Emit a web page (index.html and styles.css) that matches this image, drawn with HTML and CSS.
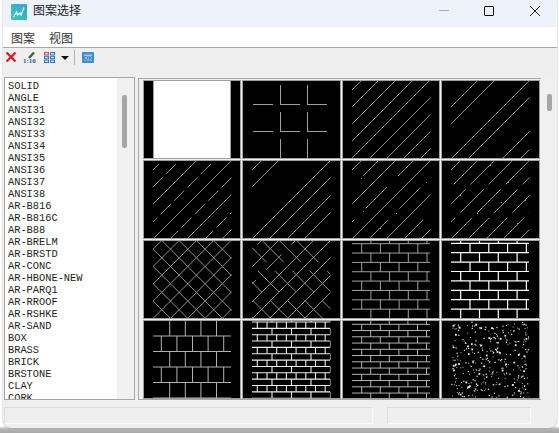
FILE: index.html
```html
<!DOCTYPE html>
<html lang="zh">
<head>
    <meta charset="UTF-8">
    <meta name="viewport" content="width=device-width, initial-scale=1.0">
    <title>图案选择</title>
    <link rel="stylesheet" href="styles.css">
</head>
<body>
    <div class="window">
        <div class="titlebar">
            <svg class="app-icon" width="16" height="16" viewBox="0 0 16 16">
                <defs>
                    <linearGradient id="app-bg" x1="0" y1="1" x2="1" y2="0">
                        <stop offset="0" stop-color="#2fd0b8"/>
                        <stop offset="1" stop-color="#3f9fd8"/>
                    </linearGradient>
                </defs>
                <rect width="16" height="16" rx="1" fill="url(#app-bg)"/>
                <path d="M2.5 13 L5.5 8 L6.5 11 L9 9 L10 11 L13 3.5" fill="none" stroke="#fff" stroke-width="1.2"/>
            </svg>
            <span class="title">图案选择</span>
            <div class="controls">
                <span class="btn-min"></span>
                <span class="btn-max"></span>
                <svg class="btn-close" width="10" height="10" viewBox="0 0 10 10">
                    <path d="M0 0 L10 10 M10 0 L0 10" stroke="#222" stroke-width="1"/>
                </svg>
            </div>
        </div>

        <div class="menubar">
            <span>图案</span>
            <span>视图</span>
        </div>

        <div class="toolbar">
            <svg class="tool tool-del" width="10" height="10" viewBox="0 0 10 10">
                <path d="M0.5 0.5 L9.5 9.5 M9.5 0.5 L0.5 9.5" stroke="#e8141c" stroke-width="2.2"/>
            </svg>
            <svg class="tool tool-scale" width="13" height="14" viewBox="0 0 13 14">
                <path d="M6 7 L11 1.5" stroke="#5a5a4a" stroke-width="2.6"/>
                <text x="0" y="12" class="scale-text">1:10</text>
            </svg>
            <svg class="tool tool-grid" width="11" height="11" viewBox="0 0 11 11">
                <g fill="#cfe0f5" stroke="#2f78c8" stroke-width="1">
                    <rect x="0.5" y="0.5" width="4" height="2.4" stroke="#d0503c"/>
                    <rect x="6.5" y="0.5" width="4" height="2.4"/>
                    <rect x="0.5" y="4.3" width="4" height="2.4"/>
                    <rect x="6.5" y="4.3" width="4" height="2.4"/>
                    <rect x="0.5" y="8.1" width="4" height="2.4"/>
                    <rect x="6.5" y="8.1" width="4" height="2.4"/>
                </g>
            </svg>
            <span class="tool-arrow"></span>
            <span class="tool-sep"></span>
            <svg class="tool tool-ok" width="12" height="11" viewBox="0 0 12 11">
                <rect width="12" height="11" rx="1" fill="#3d8fd0"/>
                <rect x="2" y="2.5" width="8" height="6" fill="#9cc9ec"/>
                <text x="6" y="8" text-anchor="middle" class="ok-text">OK</text>
            </svg>
        </div>

        <div class="main">
            <div class="list-box">
                <ul class="names">
                    <li>SOLID</li>
                    <li>ANGLE</li>
                    <li>ANSI31</li>
                    <li>ANSI32</li>
                    <li>ANSI33</li>
                    <li>ANSI34</li>
                    <li>ANSI35</li>
                    <li>ANSI36</li>
                    <li>ANSI37</li>
                    <li>ANSI38</li>
                    <li>AR-B816</li>
                    <li>AR-B816C</li>
                    <li>AR-B88</li>
                    <li>AR-BRELM</li>
                    <li>AR-BRSTD</li>
                    <li>AR-CONC</li>
                    <li>AR-HBONE-NEW</li>
                    <li>AR-PARQ1</li>
                    <li>AR-RROOF</li>
                    <li>AR-RSHKE</li>
                    <li>AR-SAND</li>
                    <li>BOX</li>
                    <li>BRASS</li>
                    <li>BRICK</li>
                    <li>BRSTONE</li>
                    <li>CLAY</li>
                    <li>CORK</li>
                </ul>
                <div class="scroll scroll-list"><span class="thumb"></span></div>
            </div>
            <div class="preview-box">
                <div class="preview-grid" id="preview-grid"></div>
            </div>
            <div class="scroll scroll-preview"><span class="thumb"></span></div>
        </div>

        <div class="statusbar">
            <div class="pane pane-wide"></div>
            <div class="pane pane-small"></div>
        </div>
    </div>

    <script src="app.js"></script>
</body>
</html>
```

FILE: styles.css
```css
html, body {
    margin: 0;
    height: 100%;
    overflow: hidden;
}
body {
    background: linear-gradient(to bottom, #fff 426px, #b4b4b4 429px, #a8a8a8 433px);
    font-family: "Noto Sans CJK SC", "Liberation Sans", sans-serif;
    color: #222;
    padding: 0 2px 5px 3px;
    box-sizing: border-box;
}
.window {
    height: 428px;
    background-color: #efefef;
    border-radius: 0 0 8px 8px;
    box-shadow: 0 0 2px rgba(0, 0, 0, 0.35);
    display: flex;
    flex-direction: column;
    overflow: hidden;
}

/* title bar */
.titlebar {
    height: 27px;
    background-color: #eef2fb;
    display: flex;
    align-items: center;
    padding: 0 17px 4px 8px;
    box-sizing: border-box;
}
.app-icon {
    margin-right: 6px;
}
.title {
    font-size: 12px;
    line-height: 16px;
    margin-bottom: 3px;
}
.controls {
    margin-left: auto;
    display: flex;
    align-items: center;
    margin-bottom: 2px;
}
.btn-min {
    width: 10px;
    height: 1px;
    background-color: #aaa;
    margin-right: 35px;
}
.btn-max {
    width: 8px;
    height: 8px;
    border: 1px solid #111;
    border-radius: 1px;
    margin-right: 36px;
}

/* menu */
.menubar {
    height: 20px;
    background-color: #fff;
    border-bottom: 1px solid #a8a8a8;
    display: flex;
    gap: 14px;
    padding-left: 8px;
    font-size: 12px;
    line-height: 21px;
    color: #333;
}

/* toolbar */
.toolbar {
    height: 27px;
    display: flex;
    align-items: flex-start;
    padding: 4px 0 0 3px;
    box-sizing: border-box;
}
.tool-scale {
    margin: -1px 0 0 7px;
}
.tool-grid {
    margin: 0 0 0 8px;
}
.tool-arrow {
    width: 0;
    height: 0;
    border-left: 4px solid transparent;
    border-right: 4px solid transparent;
    border-top: 4px solid #111;
    margin: 4px 0 0 6px;
}
.tool-sep {
    width: 1px;
    height: 15px;
    background-color: #b4b4b4;
    margin: -2px 0 0 5px;
}
.tool-ok {
    margin: 0 0 0 7px;
}
.scale-text {
    font-family: "Liberation Serif", serif;
    font-size: 7px;
    font-weight: bold;
    fill: #2b5a94;
}
.ok-text {
    font-family: "Liberation Sans", sans-serif;
    font-size: 6px;
    font-weight: bold;
    fill: #2f78c0;
}

/* list + preview */
.main {
    height: 323px;
    display: flex;
    margin: 2px 1px 0 1px;
}
.list-box {
    width: 131px;
    border: 1px solid #a6a6a6;
    box-sizing: border-box;
    display: flex;
    background-color: #fff;
    overflow: hidden;
}
.names {
    list-style: none;
    margin: 0;
    padding: 2px 0 0 3px;
    flex: 1;
    font-family: "Liberation Mono", "DejaVu Sans Mono", monospace;
    font-size: 10.35px;
    line-height: 12px;
    color: #222;
    background-color: #fff;
    overflow: hidden;
}
.scroll {
    background-color: #f0f0f0;
    position: relative;
}
.scroll-list {
    width: 17px;
}
.scroll-preview {
    width: 15px;
}
.thumb {
    position: absolute;
    background-color: #a6a6a6;
    border-radius: 2px;
}
.scroll-list .thumb {
    left: 5px;
    top: 17px;
    width: 5px;
    height: 53px;
}
.scroll-preview .thumb {
    left: 6px;
    top: 17px;
    width: 5px;
    height: 17px;
}
.preview-box {
    width: 403px;
    margin: 1px 0 0 3px;
    border-top: 1px solid #a6a6a6;
    border-left: 1px solid #a6a6a6;
    border-bottom: 1px solid #a6a6a6;
    box-sizing: border-box;
    overflow: hidden;
}
.preview-grid {
    display: grid;
    grid-template-columns: repeat(4, 98.4px);
    grid-auto-rows: 79px;
    gap: 1px;
    padding: 1px 0 0 4px;
}
.cell {
    background-color: #000;
    border: 1px solid #a0a0a0;
    box-sizing: border-box;
    overflow: hidden;
}
.cell svg {
    display: block;
}

/* status bar */
.statusbar {
    display: flex;
    margin: 7px 0 0 1px;
}
.pane {
    height: 17px;
    box-sizing: border-box;
    border-top: 1px solid #dcdcdc;
    border-left: 1px solid #dcdcdc;
    border-right: 1px solid #fafafa;
    border-bottom: 1px solid #fafafa;
}
.pane-wide {
    width: 369px;
}
.pane-small {
    width: 144px;
    margin-left: 14px;
}
```

FILE: app.js
```js
// hatch previews, coordinates are relative to the black area of a cell
const LINE = '#a0a0a0';
const PITCH = 17.3;

function seg(x1, y1, x2, y2, color, width, dash) {
    return '<line x1="' + x1 + '" y1="' + y1 + '" x2="' + x2 + '" y2="' + y2 +
        '" stroke="' + (color || LINE) + '" stroke-width="' + (width || 1) + '"' +
        (dash ? ' stroke-dasharray="' + dash + '"' : '') + '/>';
}

// line of x + y = c, going up to the right
function hatch(c, dash) {
    return seg(c - 80, 80, c, 0, LINE, 0.9, dash);
}

// line of x - y = d, going down to the right
function cross(d, dash) {
    return seg(d, 0, d + 80, 80, LINE, 0.9, dash);
}

function dots(list) {
    return list.map(p => '<rect x="' + p[0] + '" y="' + p[1] + '" width="1" height="1" fill="#999"/>').join('');
}

// brick courses: o.y first joint, o.dy course height, o.a / o.b first vertical of the two course kinds
function bricks(o) {
    let out = '';
    for (let i = -1; o.y + i * o.dy < 78; i++) {
        const top = o.y + i * o.dy;
        if (i >= 0) out += seg(9, top, 87, top, o.color, o.width);
        const first = (i + 2) % 2 === 0 ? o.a : o.b;
        const step = (i + 2) % 2 === 0 ? o.stepA || o.step : o.stepB || o.step;
        for (let x = first; x < 88; x += step) {
            out += seg(x, top, x, top + o.dy, o.color, o.width);
        }
    }
    return out;
}

function speckle() {
    let seed = 73451;
    let out = '';
    function rnd() {
        seed = (seed + 0x6D2B79F5) | 0;
        let t = Math.imul(seed ^ (seed >>> 15), 1 | seed);
        t = (t + Math.imul(t ^ (t >>> 7), 61 | t)) ^ t;
        return ((t ^ (t >>> 14)) >>> 0) / 4294967296;
    }
    for (let i = 0; i < 340; i++) {
        const x = 9 + rnd() * 78;
        const y = rnd() * 77;
        const r = rnd();
        const size = r > 0.88 ? 1.8 : r > 0.5 ? 1.2 : 0.9;
        out += '<rect x="' + x.toFixed(1) + '" y="' + y.toFixed(1) + '" width="' + size + '" height="' + size +
            '" fill="#eee"/>';
    }
    return out;
}

function lines(list, dash) {
    return list.map(c => hatch(c, dash)).join('');
}

const patterns = [
    // SOLID
    '<rect x="9.5" y="0" width="77" height="78" fill="#fff"/>' +
        seg(9.5, 0, 9.5, 78) + seg(86.5, 0, 86.5, 78),
    // ANGLE
    [23.5, 50.5].map(y => seg(10, y, 30, y) + seg(37, y, 57, y) + seg(64, y, 84, y)).join('') +
        [[4, 24], [31, 51], [58, 78]].map(r => seg(37.5, r[0], 37.5, r[1]) + seg(64.5, r[0], 64.5, r[1])).join(''),
    // ANSI31
    lines([18, 35, 52, 69, 86, 104, 121, 138, 155]),
    // ANSI32
    lines([35, 52, 87, 104, 138, 156]),
    // ANSI33
    lines([52, 87, 121, 156]) + lines([18, 35, 70, 104, 139], '14 5'),
    // ANSI34
    lines([18, 35, 87, 104, 122, 139]),
    // ANSI35
    lines([18, 52, 87, 121, 156]) + lines([35, 70, 104, 139], '30 16') +
        dots([[65, 4], [18, 17], [83, 21], [35, 34], [20, 50], [53, 52], [37, 67], [69, 69]]),
    // ANSI36
    lines([18, 35, 52, 70, 87, 104, 122, 139, 156], '33 7') +
        dots([[48, 4], [24, 10], [66, 21], [41, 28], [18, 34], [83, 39], [59, 41], [35, 52], [11, 58], [75, 62], [53, 68], [28, 75]]),
    // ANSI37
    [0, 1, 2, 3, 4, 5, 6, 7, 8, 9].map(k => hatch(k * PITCH)).join('') +
        [-5, -4, -3, -2, -1, 0, 1, 2, 3, 4, 5].map(k => cross(k * PITCH + 1)).join(''),
    // ANSI38
    lines([35, 70, 87, 104, 122, 139]) + lines([18, 52], '22 14') +
        [-4, -3, -2, -1, 0, 1, 2, 3, 4].map(k => cross(k * PITCH - 15, '30 12')).join(''),
    // AR-B816
    bricks({ y: 2.7, dy: 9.35, a: 18.7, b: 27.9, step: 18.7 }),
    // AR-B816C
    bricks({ y: 2.3, dy: 9.4, a: 28, b: 18.7, step: 18.8, color: '#fff', width: 1.2 }),
    // AR-B88
    bricks({ y: 15, dy: 15.5, a: 17.3, b: 25.7, step: 15.6, color: '#b0b0b0' }),
    // AR-BRELM
    bricks({ y: 1, dy: 6.35, a: 14.3, b: 29, stepA: 9.7, stepB: 19.5, color: '#eee', width: 1.1 }),
    // AR-BRSTD
    bricks({ y: 3.3, dy: 6.25, a: 18.7, b: 27.7, step: 18.6, color: '#b4b4b4' }),
    // AR-CONC
    speckle()
];

const grid = document.getElementById('preview-grid');
patterns.forEach((p, i) => {
    const cell = document.createElement('div');
    cell.className = 'cell';
    cell.innerHTML = '<svg width="97" height="77" viewBox="0 0 97 77">' +
        '<clipPath id="clip' + i + '"><rect x="9" y="0" width="78.5" height="78"/></clipPath>' +
        '<g clip-path="url(#clip' + i + ')">' + p + '</g></svg>';
    grid.appendChild(cell);
});
```
